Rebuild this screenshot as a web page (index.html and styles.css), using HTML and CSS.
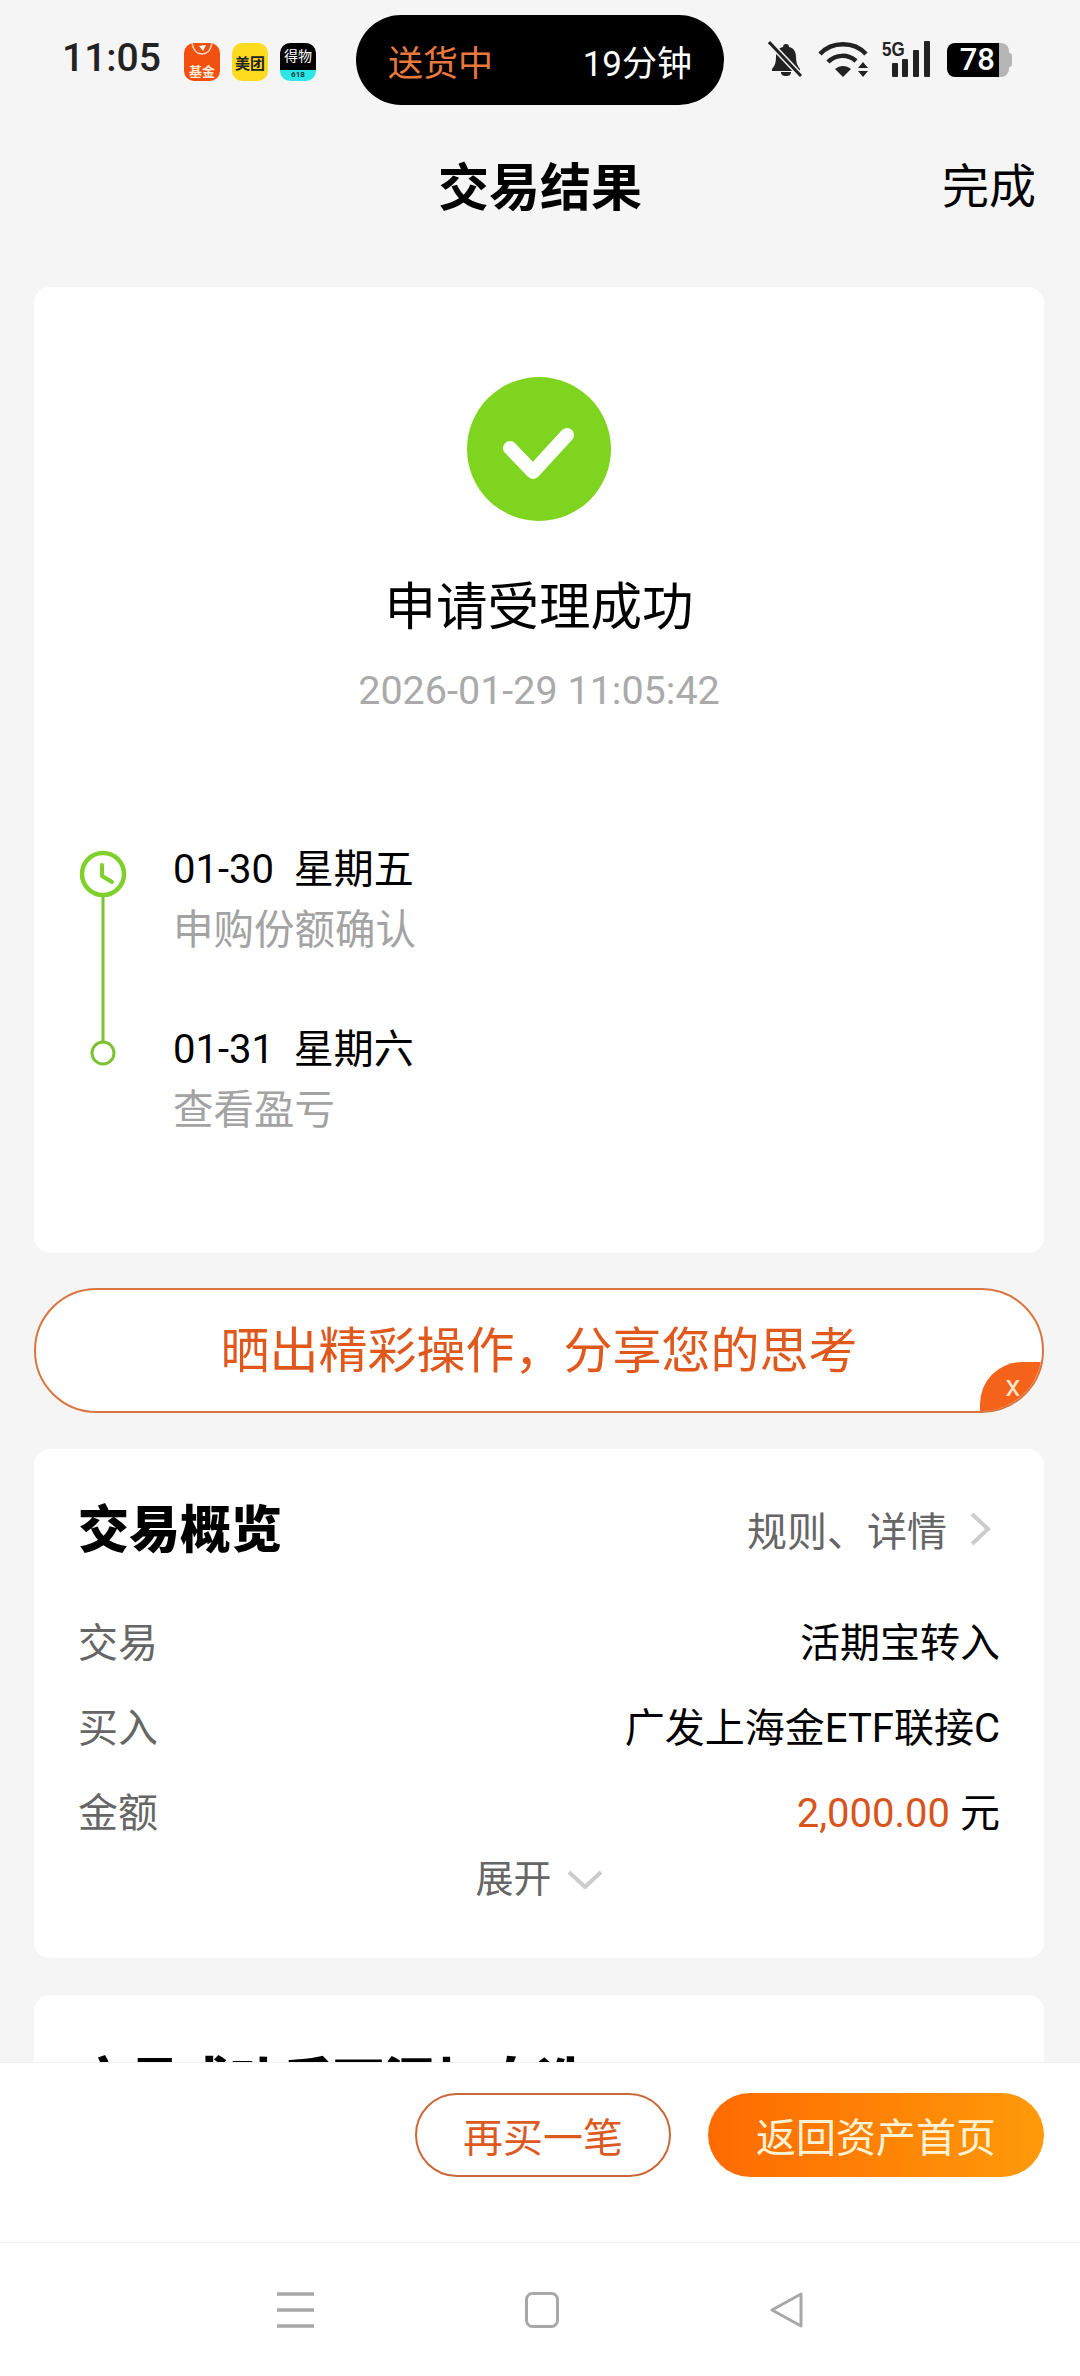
FILE: index.html
```html
<!doctype html>
<html lang="zh-CN">
  <head>
    <meta charset="UTF-8" />
    <meta name="viewport" content="width=device-width, initial-scale=1.0" />
    <title>交易结果</title>
    <link rel="stylesheet" href="styles.css">
  </head>
  <body>
    <div class="page">
      <div class="status-bar">
        <div class="clock">11:05</div>
        <div class="app-icons">
          <div class="app-icon app-fund">
            <svg class="fund-arc" viewBox="0 0 36 18"><path d="M8 0c1 7 5 11 10 11s9-4 10-11" fill="none" stroke="#ffd9c2" stroke-width="1.5" /><path d="M15 3l7-1-3 6z" fill="#fff" /></svg>
            <span>基金</span>
          </div>
          <div class="app-icon app-meituan"><span>美团</span></div>
          <div class="app-icon app-dewu"><span class="dewu-name">得物</span><span class="dewu-tag">618</span></div>
        </div>
        <div class="delivery-pill">
          <span class="delivery-state">送货中</span>
          <span class="delivery-time">19分钟</span>
        </div>
        <div class="status-icons">
          <svg class="icon-bell" width="36" height="36" viewBox="0 0 36 36">
            <path d="M18 3c2 0 3 1 3 3 5 1 7 5 7 10 0 5 1 9 4 12v2H4v-2c3-3 4-7 4-12 0-5 2-9 7-10 0-2 1-3 3-3z" fill="#222" />
            <path d="M13 31h10c0 3-2 4-5 4s-5-1-5-4z" fill="#222" />
            <path d="M1 1l32 34" stroke="#f5f5f5" stroke-width="6" />
            <path d="M1 1l32 34" stroke="#222" stroke-width="3" />
          </svg>
          <svg class="icon-wifi" width="52" height="36" viewBox="0 0 52 36">
            <path d="M2 13c12-13 34-13 46 0" fill="none" stroke="#222" stroke-width="4.5" />
            <path d="M10 21c8-8 20-8 28-1" fill="none" stroke="#222" stroke-width="4.5" />
            <path d="M17 28c5-4 11-4 16 0l-8 8z" fill="#222" />
            <path d="M45 21l5 6H40zM45 36l5-6H40z" fill="#222" />
          </svg>
          <div class="signal">
            <span class="signal-type">5G</span>
            <i class="bar bar-1"></i>
            <i class="bar bar-2"></i>
            <i class="bar bar-3"></i>
            <i class="bar bar-4"></i>
          </div>
          <div class="battery">
            <span class="battery-level">78</span>
            <span class="battery-rest"></span>
          </div>
        </div>
      </div>

      <div class="header">
        <div class="header-title">交易结果</div>
        <div class="header-done">完成</div>
      </div>

      <div class="content">
        <div class="card result-card">
          <svg class="result-icon" width="144" height="144" viewBox="0 0 144 144">
            <circle cx="72" cy="72" r="72" fill="#7fd41f" />
            <path d="M43 71l23 24 34-37" fill="none" stroke="#fff" stroke-width="14" stroke-linecap="round" stroke-linejoin="round" />
          </svg>
          <div class="result-title">申请受理成功</div>
          <div class="result-time">2026-01-29 11:05:42</div>

          <div class="timeline">
            <svg class="timeline-rail" width="50" height="240" viewBox="0 0 50 240">
              <path d="M25 56v145" stroke="#7cc232" stroke-width="3" />
              <circle cx="25" cy="34" r="21" fill="#fff" stroke="#7fd02a" stroke-width="4.5" />
              <path d="M24 25v11l10 6" fill="none" stroke="#7fd02a" stroke-width="4" stroke-linecap="round" stroke-linejoin="round" />
              <circle cx="25" cy="213" r="11" fill="#fff" stroke="#7cc232" stroke-width="3" />
            </svg>
            <div class="timeline-items">
              <div class="timeline-item">
                <div class="timeline-date">01-30&nbsp;&nbsp;星期五</div>
                <div class="timeline-desc">申购份额确认</div>
              </div>
              <div class="timeline-item">
                <div class="timeline-date">01-31&nbsp;&nbsp;星期六</div>
                <div class="timeline-desc">查看盈亏</div>
              </div>
            </div>
          </div>
        </div>

        <div class="share-banner">
          <span>晒出精彩操作，分享您的思考</span>
          <div class="share-close">x</div>
        </div>

        <div class="card overview-card">
          <div class="overview-head">
            <div class="card-title">交易概览</div>
            <div class="overview-link">
              规则、详情
              <svg class="chevron-right" width="23" height="36" viewBox="0 0 23 36"><path d="M3 3l16 15L3 33" fill="none" stroke="#ccc" stroke-width="4" /></svg>
            </div>
          </div>
          <div class="overview-row">
            <span class="row-label">交易</span>
            <span class="row-value">活期宝转入</span>
          </div>
          <div class="overview-row">
            <span class="row-label">买入</span>
            <span class="row-value">广发上海金ETF联接C</span>
          </div>
          <div class="overview-row">
            <span class="row-label">金额</span>
            <span class="row-value"><span class="amount">2,000.00</span> 元</span>
          </div>
          <div class="overview-more">
            展开
            <svg width="36" height="20" viewBox="0 0 36 20"><path d="M2 3l16 15L34 3" fill="none" stroke="#ccc" stroke-width="4" /></svg>
          </div>
        </div>

        <div class="card next-card">
          <div class="card-title">交易成功后可添加自选</div>
        </div>
      </div>

      <div class="footer">
        <div class="footer-actions">
          <div class="btn btn-outline">再买一笔</div>
          <div class="btn btn-solid">返回资产首页</div>
        </div>
        <div class="nav-bar">
          <svg width="37" height="36" viewBox="0 0 37 36"><path d="M0 2h37M0 18h37M0 34h37" stroke="#a8a8a8" stroke-width="3.5" /></svg>
          <svg width="34" height="36" viewBox="0 0 34 36"><rect x="1.5" y="1.5" width="31" height="33" rx="6" fill="none" stroke="#a8a8a8" stroke-width="3" /></svg>
          <svg width="33" height="36" viewBox="0 0 33 36"><path d="M31 2v32L2 18z" fill="none" stroke="#a8a8a8" stroke-width="3" stroke-linejoin="round" /></svg>
        </div>
      </div>
    </div>
  </body>
</html>
```

FILE: styles.css
```css
* {
  margin: 0;
  padding: 0;
  box-sizing: border-box;
}

body {
  font-family: Roboto, "Noto Sans CJK SC", sans-serif;
  background: #f5f5f5;
  color: #000;
}

.page {
  width: 1080px;
  height: 2376px;
  display: flex;
  flex-direction: column;
  overflow: hidden;
}

/* status bar */
.status-bar {
  height: 120px;
  flex: none;
  display: flex;
  align-items: flex-start;
  padding: 15px 0 0 62px;
}

.clock {
  width: 97px;
  margin-top: 19px;
  font-size: 39px;
  line-height: 48px;
  font-weight: 500;
  color: #222;
}

.app-icons {
  display: flex;
  gap: 12px;
  margin: 28px 0 0 25px;
}

.app-icon {
  position: relative;
  width: 36px;
  height: 38px;
  border-radius: 10px;
  overflow: hidden;
  display: flex;
  align-items: center;
  justify-content: center;
}

.app-fund {
  background: #f2500f;
  color: #ffe9d8;
  font-size: 13px;
  font-weight: 700;
  padding-top: 16px;
}

.fund-arc {
  position: absolute;
  top: 0;
  left: 0;
  width: 36px;
  height: 18px;
}

.app-meituan {
  background: #ffdb1f;
  color: #222;
  font-size: 15px;
  font-weight: 700;
}

.app-dewu {
  flex-direction: column;
  justify-content: flex-start;
  background: linear-gradient(#000 0 70%, #2ee6e6 70%);
  color: #fff;
}

.dewu-name {
  font-size: 14px;
  line-height: 26px;
}

.dewu-tag {
  font-size: 8px;
  line-height: 12px;
  color: #003c40;
  font-weight: 700;
}

.delivery-pill {
  width: 368px;
  height: 90px;
  margin-left: 40px;
  padding: 0 32px;
  border-radius: 45px;
  background: #000;
  display: flex;
  align-items: center;
  justify-content: space-between;
  font-size: 35px;
}

.delivery-state {
  color: #e97a3c;
}

.delivery-time {
  color: #fff;
}

.status-icons {
  display: flex;
  align-items: flex-start;
  margin: 26px 0 0 44px;
}

.icon-wifi {
  margin-left: 14px;
}

.signal {
  position: relative;
  width: 48px;
  height: 36px;
  margin-left: 12px;
}

.signal-type {
  position: absolute;
  top: -2px;
  left: 0;
  font-family: "Liberation Sans", sans-serif;
  font-size: 20px;
  line-height: 20px;
  font-weight: 700;
  transform: scaleX(0.85);
  transform-origin: left top;
  color: #222;
}

.bar {
  position: absolute;
  bottom: 0;
  width: 6px;
  border-radius: 1px;
  background: #222;
}

.bar-1 {
  left: 10px;
  height: 14px;
}

.bar-2 {
  left: 20px;
  height: 18px;
}

.bar-3 {
  left: 31px;
  height: 27px;
}

.bar-4 {
  left: 42px;
  height: 36px;
}

.battery {
  display: flex;
  height: 34px;
  margin: 2px 0 0 17px;
}

.battery-level {
  width: 52px;
  background: #000;
  border-radius: 8px 0 0 8px;
  color: #fff;
  font-size: 31px;
  line-height: 34px;
  font-weight: 500;
  text-align: right;
  padding-right: 4px;
}

.battery-rest {
  position: relative;
  width: 10px;
  background: #b5b5b5;
  border-radius: 0 8px 8px 0;
}

.battery-rest::after {
  content: "";
  position: absolute;
  top: 10px;
  right: -3px;
  width: 3px;
  height: 14px;
  background: #b5b5b5;
  border-radius: 0 3px 3px 0;
}

/* title bar */
.header {
  height: 132px;
  flex: none;
  position: relative;
  display: flex;
  align-items: center;
  justify-content: center;
  padding-bottom: 5px;
}

.header-title {
  font-size: 51px;
  font-weight: 700;
}

.header-done {
  position: absolute;
  right: 44px;
  top: 34px;
  font-size: 47px;
  line-height: 66px;
}

/* scrolling area */
.content {
  flex: 1;
  min-height: 0;
  overflow: hidden;
  padding: 35px 36px 0 34px;
}

.card {
  background: #fff;
  border-radius: 16px;
}

.result-card {
  height: 966px;
  display: flex;
  flex-direction: column;
  align-items: center;
  padding-top: 90px;
}

.result-title {
  margin-top: 52px;
  font-size: 51.5px;
  line-height: 70px;
}

.result-time {
  margin-top: 23px;
  font-size: 39.5px;
  line-height: 50px;
  color: #aaa;
}

.timeline {
  align-self: stretch;
  display: flex;
  gap: 45px;
  margin-top: 124px;
  padding-left: 44px;
}

.timeline-items {
  display: flex;
  flex-direction: column;
  gap: 60px;
}

.timeline-date {
  font-size: 40px;
  line-height: 60px;
}

.timeline-desc {
  font-size: 40.5px;
  line-height: 60px;
  color: #a3a3a3;
}

.share-banner {
  position: relative;
  height: 125px;
  margin-top: 35px;
  padding-bottom: 8px;
  background: #fff;
  border: 2px solid #d9763f;
  border-radius: 63px;
  overflow: hidden;
  display: flex;
  align-items: center;
  justify-content: center;
  font-size: 49px;
  color: #e0581c;
}

.share-close {
  position: absolute;
  right: 0;
  bottom: 0;
  width: 62px;
  height: 49px;
  padding: 4px 0 0 4px;
  background: #f5621a;
  border-radius: 42px 0 48px 0;
  color: #ffe6cf;
  font-size: 30px;
  line-height: 40px;
  text-align: center;
}

.overview-card {
  height: 509px;
  margin-top: 36px;
  padding: 47px 44px 0 44px;
}

.overview-head {
  display: flex;
  align-items: center;
  justify-content: space-between;
  height: 70px;
  margin-bottom: 35px;
}

.card-title {
  font-size: 51px;
  line-height: 70px;
  font-weight: 900;
}

.overview-link {
  display: flex;
  align-items: center;
  gap: 22px;
  padding-bottom: 4px;
  font-size: 40px;
  color: #666;
}

.chevron-right {
  margin-right: 8px;
}

.overview-row {
  display: flex;
  justify-content: space-between;
  height: 85px;
  padding-top: 10px;
  font-size: 40px;
  line-height: 65px;
}

.row-label {
  color: #666;
}

.amount {
  color: #d9541c;
}

.overview-more {
  display: flex;
  align-items: center;
  justify-content: center;
  gap: 15px;
  margin-top: -5px;
  font-size: 38px;
  line-height: 56px;
  color: #666;
}

.next-card {
  height: 300px;
  margin-top: 37px;
  padding: 53px 44px 0;
}

/* bottom bar */
.footer {
  height: 314px;
  flex: none;
  background: #fff;
  border-top: 1px solid #eee;
}

.footer-actions {
  height: 180px;
  display: flex;
  justify-content: flex-end;
  gap: 37px;
  padding: 30px 36px 0 0;
  border-bottom: 1px solid #f0f0f0;
}

.btn {
  height: 84px;
  border-radius: 42px;
  display: flex;
  align-items: center;
  justify-content: center;
  font-size: 40px;
}

.btn-outline {
  width: 256px;
  border: 2px solid #c9693a;
  color: #dc5a1f;
}

.btn-solid {
  width: 336px;
  background: linear-gradient(90deg, #ff6a00, #ff9a0a);
  color: #fff3d6;
}

.nav-bar {
  height: 133px;
  display: flex;
  align-items: center;
  justify-content: center;
  gap: 211px;
}
```
